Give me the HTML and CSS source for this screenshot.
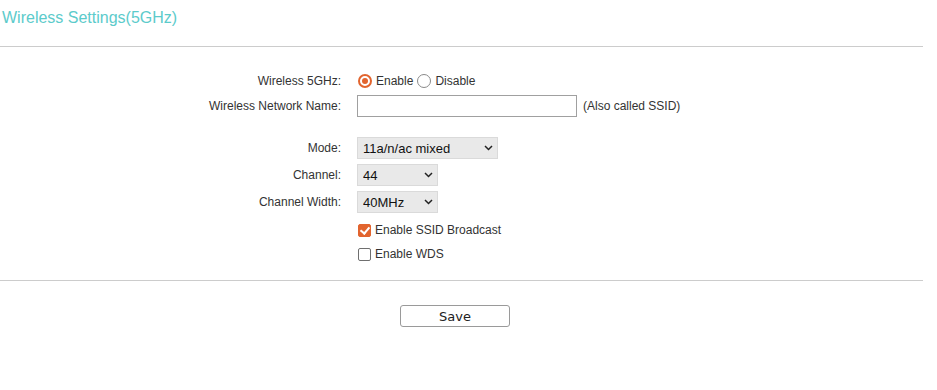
FILE: index.html
```html
<!DOCTYPE html>
<html lang="en">
<head>
	<meta charset="UTF-8">
	<title>Wireless Settings(5GHz)</title>
	<link rel="stylesheet" href="styles.css">
</head>
<body>
	<div class="head">
		<h1 class="title">Wireless Settings(5GHz)</h1>
	</div>

	<div class="form">
		<div class="row r_radio">
			<label class="lbl">Wireless 5GHz:</label>
			<div class="ctl">
				<label class="opt"><input type="radio" name="w5" checked> Enable</label>
				<label class="opt"><input type="radio" name="w5"> Disable</label>
			</div>
		</div>
		<div class="row r_name">
			<label class="lbl">Wireless Network Name:</label>
			<div class="ctl">
				<input class="txt" type="text" value="">
				<span class="hint">(Also called SSID)</span>
			</div>
		</div>
		<div class="row r_mode">
			<label class="lbl">Mode:</label>
			<div class="ctl">
				<span class="sel sel_l">
					<select><option>11a/n/ac mixed</option></select>
					<svg class="arr" width="9" height="6" viewBox="0 0 9 6"><path d="M1 1 L4.5 4.5 L8 1" fill="none" stroke="#222" stroke-width="1.5"/></svg>
				</span>
			</div>
		</div>
		<div class="row r_sel">
			<label class="lbl">Channel:</label>
			<div class="ctl">
				<span class="sel">
					<select><option>44</option></select>
					<svg class="arr" width="9" height="6" viewBox="0 0 9 6"><path d="M1 1 L4.5 4.5 L8 1" fill="none" stroke="#222" stroke-width="1.5"/></svg>
				</span>
			</div>
		</div>
		<div class="row r_sel">
			<label class="lbl">Channel Width:</label>
			<div class="ctl">
				<span class="sel">
					<select><option>40MHz</option></select>
					<svg class="arr" width="9" height="6" viewBox="0 0 9 6"><path d="M1 1 L4.5 4.5 L8 1" fill="none" stroke="#222" stroke-width="1.5"/></svg>
				</span>
			</div>
		</div>
		<div class="row r_chk first">
			<span class="lbl"></span>
			<div class="ctl">
				<label class="opt"><input type="checkbox" checked> Enable SSID Broadcast</label>
			</div>
		</div>
		<div class="row r_chk">
			<span class="lbl"></span>
			<div class="ctl">
				<label class="opt"><input type="checkbox"> Enable WDS</label>
			</div>
		</div>
	</div>

	<div class="foot">
		<button class="save" type="button">Save</button>
	</div>
</body>
</html>
```

FILE: styles.css
```css
*{
	margin: 0;
	padding: 0;
	box-sizing: border-box;
}
body{
	background: #fff;
	color: #333;
	font-family: "Liberation Sans", Arial, sans-serif;
	font-size: 12px;
}
.head{
	width: 923px;
	height: 47px;
	border-bottom: 1px solid #ccc;
	padding: 8px 0 0 2px;
}
.title{
	font-size: 16px;
	font-weight: normal;
	line-height: 20px;
	color: #5ccbcb;
}
.form{
	width: 923px;
	padding: 24px 0 17px;
	border-bottom: 1px solid #ccc;
}
.row{
	display: flex;
	align-items: center;
}
.lbl{
	width: 341px;
	text-align: right;
	flex-shrink: 0;
}
.ctl{
	margin-left: 16px;
	display: flex;
	align-items: center;
}
.r_radio{
	height: 20px;
}
.r_name{
	height: 22px;
	margin-top: 4px;
}
.r_mode{
	height: 22px;
	margin-top: 20px;
}
.r_sel{
	height: 22px;
	margin-top: 5px;
}
.r_chk{
	height: 18px;
	margin-top: 6px;
}
.r_chk.first{
	margin-top: 8px;
}
.opt{
	display: flex;
	align-items: center;
	margin-right: 3px;
}
.opt input{
	appearance: none;
	-webkit-appearance: none;
	width: 14px;
	height: 14px;
	margin: 0 4px 0 1px;
	border: 1px solid #8a8a8a;
	background: #fff;
	position: relative;
}
.opt input[type=radio]{
	border-radius: 50%;
}
.opt input[type=radio]:checked{
	border: 2px solid #e2642e;
}
.opt input[type=radio]:checked::after{
	content: "";
	position: absolute;
	left: 2px;
	top: 2px;
	width: 6px;
	height: 6px;
	border-radius: 50%;
	background: #e2642e;
}
.opt input[type=checkbox]{
	border-radius: 2px;
	border-color: #6f6f6f;
	width: 13px;
	height: 13px;
}
.opt input[type=checkbox]:checked{
	background: #e2642e;
	border-color: #e2642e;
}
.opt input[type=checkbox]:checked::after{
	content: "";
	position: absolute;
	left: 3px;
	top: 0px;
	width: 4px;
	height: 7px;
	border: solid #fff;
	border-width: 0 2px 2px 0;
	transform: rotate(40deg);
}
.txt{
	width: 220px;
	height: 22px;
	border: 1px solid #a0a0a0;
	font: 12px "Liberation Sans", Arial, sans-serif;
	padding: 0 4px;
}
.hint{
	margin-left: 6px;
}
.sel{
	position: relative;
	display: block;
	width: 81px;
	height: 22px;
}
.sel_l{
	width: 141px;
}
.sel select{
	appearance: none;
	-webkit-appearance: none;
	width: 100%;
	height: 22px;
	border: 1px solid #dadada;
	border-radius: 0;
	background: #e9e9e9;
	color: #111;
	font: 13px "Liberation Sans", Arial, sans-serif;
	padding: 0 0 0 5px;
}
.sel .arr{
	position: absolute;
	right: 5px;
	top: 8px;
	pointer-events: none;
}
.foot{
	width: 923px;
	padding-top: 24px;
	display: flex;
	justify-content: center;
}
.save{
	width: 110px;
	height: 22px;
	margin-right: 13px;
	border: 1px solid #9a9a9a;
	border-radius: 3px;
	background: #fff;
	color: #222;
	font: 13px "DejaVu Sans", sans-serif;
}
```
